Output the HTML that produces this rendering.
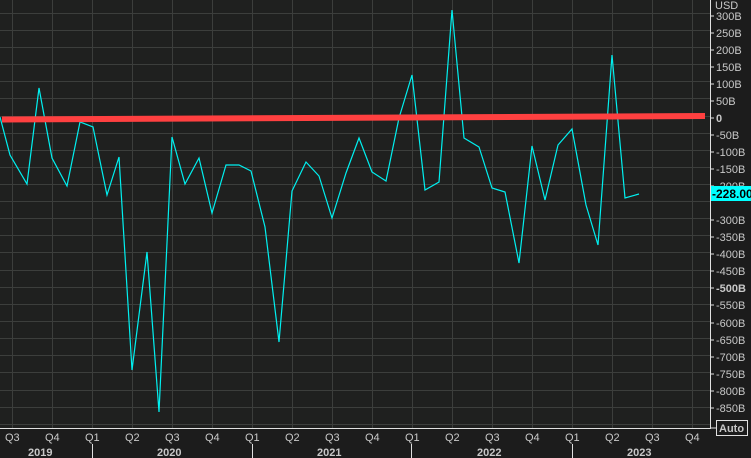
<!DOCTYPE html>
<html><head><meta charset="utf-8"><style>
html,body{margin:0;padding:0;background:#1c1c1c;width:751px;height:458px;overflow:hidden}
svg{display:block}
text{font-family:"Liberation Sans",sans-serif;fill:#c8c8c8;font-size:11px}
</style></head><body>
<svg width="751" height="458" viewBox="0 0 751 458">
<rect x="0" y="0" width="751" height="458" fill="#1c1c1c"/>
<rect x="0" y="0" width="710" height="428" fill="#1f201f"/>
<g stroke="#3c3e3c" stroke-width="1">
<line x1="0" y1="13.5" x2="710" y2="13.5"/><line x1="0" y1="30.5" x2="710" y2="30.5"/><line x1="0" y1="47.5" x2="710" y2="47.5"/><line x1="0" y1="64.5" x2="710" y2="64.5"/><line x1="0" y1="81.5" x2="710" y2="81.5"/><line x1="0" y1="98.5" x2="710" y2="98.5"/><line x1="0" y1="116.5" x2="710" y2="116.5"/><line x1="0" y1="133.5" x2="710" y2="133.5"/><line x1="0" y1="150.5" x2="710" y2="150.5"/><line x1="0" y1="167.5" x2="710" y2="167.5"/><line x1="0" y1="184.5" x2="710" y2="184.5"/><line x1="0" y1="201.5" x2="710" y2="201.5"/><line x1="0" y1="218.5" x2="710" y2="218.5"/><line x1="0" y1="235.5" x2="710" y2="235.5"/><line x1="0" y1="252.5" x2="710" y2="252.5"/><line x1="0" y1="270.5" x2="710" y2="270.5"/><line x1="0" y1="287.5" x2="710" y2="287.5"/><line x1="0" y1="304.5" x2="710" y2="304.5"/><line x1="0" y1="321.5" x2="710" y2="321.5"/><line x1="0" y1="338.5" x2="710" y2="338.5"/><line x1="0" y1="355.5" x2="710" y2="355.5"/><line x1="0" y1="372.5" x2="710" y2="372.5"/><line x1="0" y1="390.5" x2="710" y2="390.5"/><line x1="0" y1="407.5" x2="710" y2="407.5"/><line x1="0" y1="424.5" x2="710" y2="424.5"/>
<line x1="12.5" y1="0" x2="12.5" y2="428"/><line x1="52.5" y1="0" x2="52.5" y2="428"/><line x1="92.5" y1="0" x2="92.5" y2="428"/><line x1="132.5" y1="0" x2="132.5" y2="428"/><line x1="172.5" y1="0" x2="172.5" y2="428"/><line x1="212.5" y1="0" x2="212.5" y2="428"/><line x1="252.5" y1="0" x2="252.5" y2="428"/><line x1="292.5" y1="0" x2="292.5" y2="428"/><line x1="332.5" y1="0" x2="332.5" y2="428"/><line x1="372.5" y1="0" x2="372.5" y2="428"/><line x1="412.5" y1="0" x2="412.5" y2="428"/><line x1="452.5" y1="0" x2="452.5" y2="428"/><line x1="492.5" y1="0" x2="492.5" y2="428"/><line x1="532.5" y1="0" x2="532.5" y2="428"/><line x1="572.5" y1="0" x2="572.5" y2="428"/><line x1="612.5" y1="0" x2="612.5" y2="428"/><line x1="652.5" y1="0" x2="652.5" y2="428"/><line x1="692.5" y1="0" x2="692.5" y2="428"/>
</g>
<polyline fill="none" stroke="#00f0f0" stroke-width="1.2" points="0,117 10,155 27,184 39,88 52,158 67,186 80,122 93,127 107,195 119,157 132,370 147,252 159,412 172,137 185,184 199,158 212,213 226,165 239,165 251,171 265,227 279,342 292,191 306,162 319,176 332,218 346,173 359,138 372,172 386,181 399,118 412,75 425,190 439,182 452,10 464,138 479,147 492,188 505,192 519,263 532,146 545,200 558,145 572,129 586,205 598,245 612,55 625,198 639,194"/>
<line x1="2" y1="119.5" x2="705" y2="116" stroke="#ff4040" stroke-width="6"/>
<line x1="710.5" y1="0" x2="710.5" y2="428" stroke="#e0e0e0" stroke-width="1"/>
<line x1="0" y1="428.5" x2="711" y2="428.5" stroke="#e0e0e0" stroke-width="1"/>
<g stroke="#e0e0e0">
<line x1="710" y1="16" x2="714" y2="16"/><line x1="710" y1="33" x2="714" y2="33"/><line x1="710" y1="50" x2="714" y2="50"/><line x1="710" y1="67" x2="714" y2="67"/><line x1="710" y1="84" x2="714" y2="84"/><line x1="710" y1="101" x2="714" y2="101"/><line x1="710" y1="118" x2="714" y2="118"/>
<line x1="710" y1="135" x2="714" y2="135"/><line x1="710" y1="152" x2="714" y2="152"/><line x1="710" y1="169" x2="714" y2="169"/><line x1="710" y1="186" x2="714" y2="186"/><line x1="710" y1="220" x2="714" y2="220"/><line x1="710" y1="237" x2="714" y2="237"/><line x1="710" y1="254" x2="714" y2="254"/><line x1="710" y1="271" x2="714" y2="271"/><line x1="710" y1="288" x2="714" y2="288"/><line x1="710" y1="305" x2="714" y2="305"/><line x1="710" y1="323" x2="714" y2="323"/><line x1="710" y1="340" x2="714" y2="340"/><line x1="710" y1="357" x2="714" y2="357"/><line x1="710" y1="374" x2="714" y2="374"/><line x1="710" y1="391" x2="714" y2="391"/><line x1="710" y1="408" x2="714" y2="408"/><line x1="710" y1="428" x2="716" y2="428"/>
</g>
<g font-size="11">
<text x="715" y="9">USD</text>
<text x="716" y="20">300B</text><text x="716" y="37">250B</text><text x="716" y="54">200B</text><text x="716" y="71">150B</text><text x="716" y="88">100B</text><text x="716" y="105">50B</text><text x="716" y="122" font-weight="bold">0</text>
<text x="716" y="139">-50B</text><text x="716" y="156">-100B</text><text x="716" y="173">-150B</text><text x="716" y="190">-200B</text>
<text x="716" y="224">-300B</text><text x="716" y="241">-350B</text><text x="716" y="258">-400B</text><text x="716" y="275">-450B</text><text x="716" y="292" font-weight="bold">-500B</text><text x="716" y="309">-550B</text><text x="716" y="327">-600B</text><text x="716" y="344">-650B</text><text x="716" y="361">-700B</text><text x="716" y="378">-750B</text><text x="716" y="395">-800B</text><text x="716" y="412">-850B</text>
</g>
<rect x="711" y="186" width="40" height="15" fill="#00ffff"/>
<text x="712" y="198" style="fill:#000;font-weight:bold;font-size:12px">-228.00</text>
<rect x="716.5" y="420.5" width="31" height="15" fill="none" stroke="#e0e0e0"/>
<text x="719" y="432" font-weight="bold" font-size="11">Auto</text>
<g font-size="11">
<text x="5" y="441">Q3</text><text x="45" y="441">Q4</text><text x="85" y="441">Q1</text><text x="125" y="441">Q2</text><text x="165" y="441">Q3</text><text x="205" y="441">Q4</text><text x="245" y="441">Q1</text><text x="285" y="441">Q2</text><text x="325" y="441">Q3</text><text x="365" y="441">Q4</text><text x="405" y="441">Q1</text><text x="445" y="441">Q2</text><text x="485" y="441">Q3</text><text x="525" y="441">Q4</text><text x="565" y="441">Q1</text><text x="605" y="441">Q2</text><text x="645" y="441">Q3</text><text x="685" y="441">Q4</text>
</g>
<g stroke="#e0e0e0"><line x1="92.5" y1="444" x2="92.5" y2="458"/><line x1="252.5" y1="444" x2="252.5" y2="458"/><line x1="411.5" y1="444" x2="411.5" y2="458"/><line x1="572.5" y1="444" x2="572.5" y2="458"/></g>
<g font-weight="bold" font-size="11">
<text x="28" y="456">2019</text><text x="157" y="456">2020</text><text x="317" y="456">2021</text><text x="477" y="456">2022</text><text x="627" y="456">2023</text>
</g>
</svg>
</body></html>
